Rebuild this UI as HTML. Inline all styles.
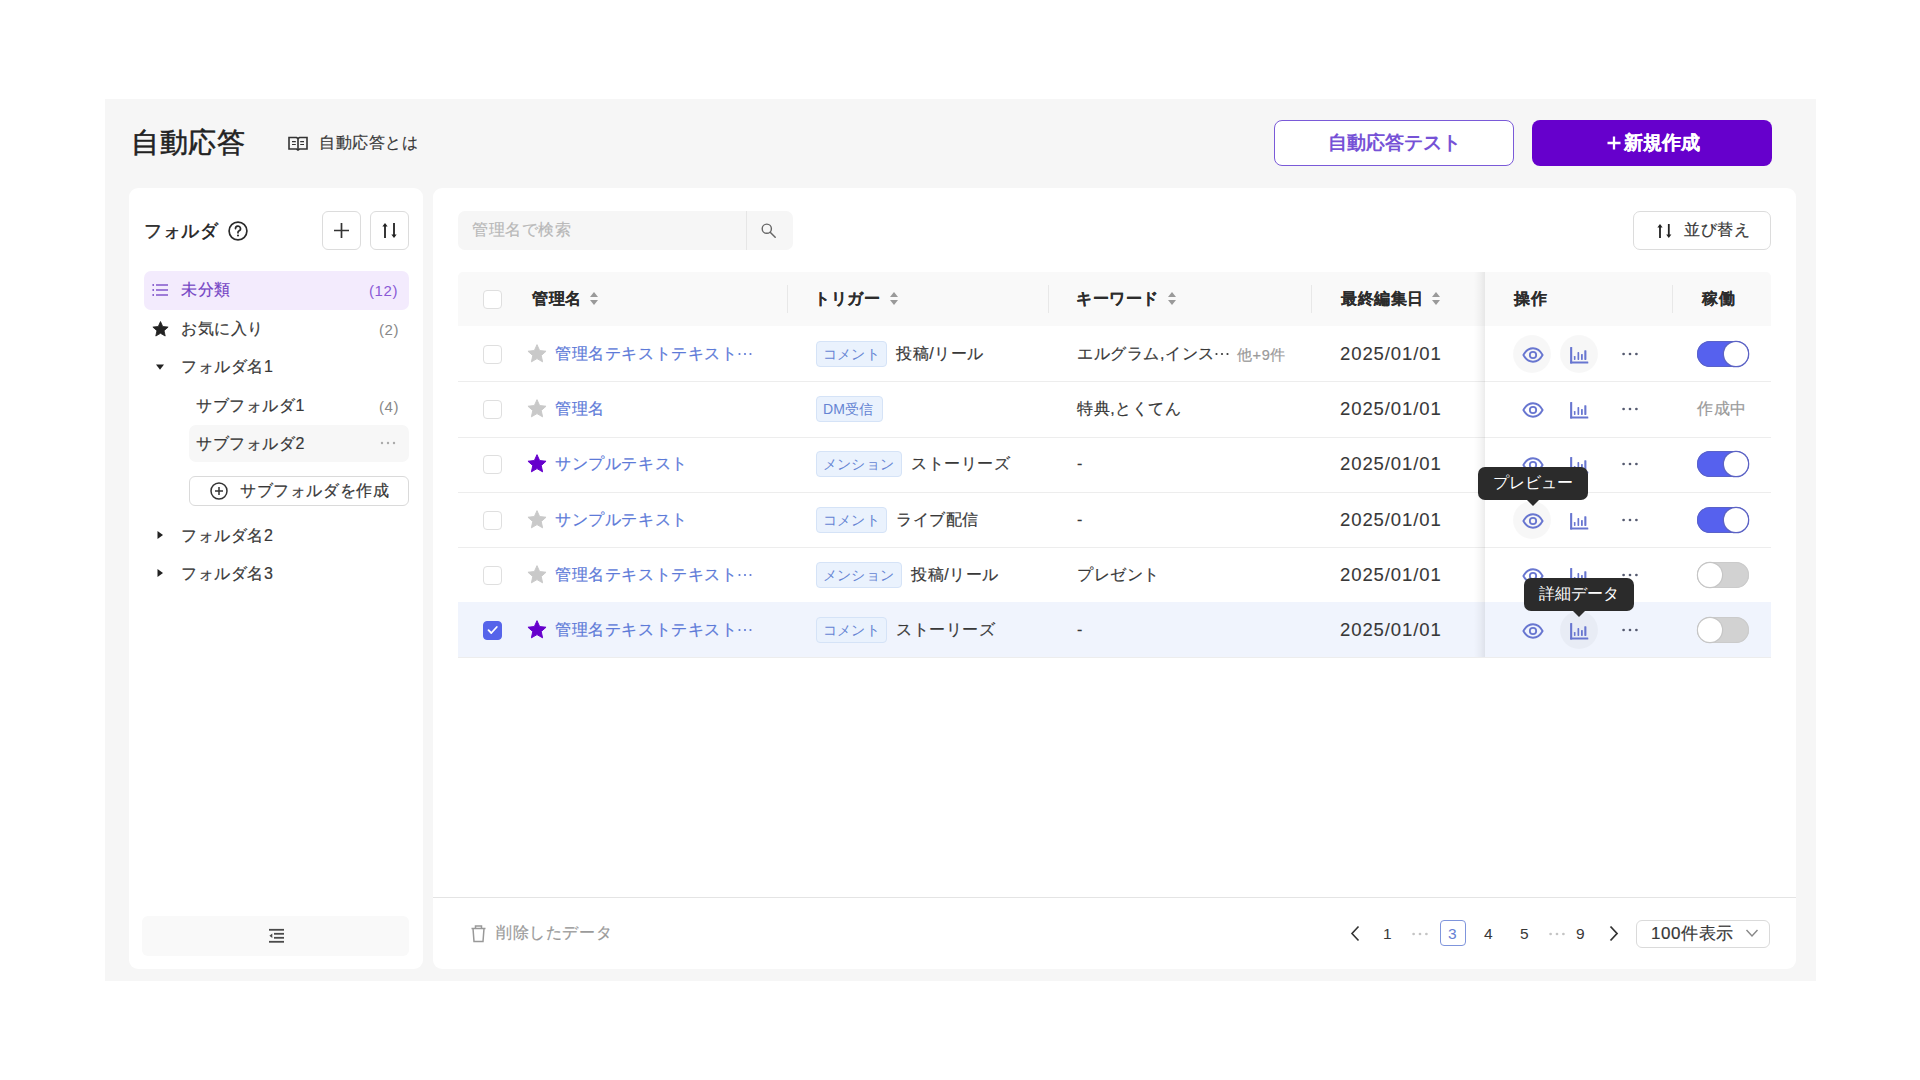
<!DOCTYPE html>
<html><head><meta charset="utf-8"><style>
*{box-sizing:border-box;margin:0;padding:0}
html,body{width:1920px;height:1080px;overflow:hidden;background:#fff;font-family:"Liberation Sans",sans-serif;color:#383838}
.a{position:absolute}
.t{position:absolute;white-space:nowrap;line-height:24px;letter-spacing:0.6px;-webkit-text-stroke:0.2px currentColor}
.sq{border:1px solid #dcdcdc;background:#fff;border-radius:6px}
.cb{position:absolute;width:19px;height:19px;border:1.5px solid #dfdfdf;border-radius:4px;background:#fff}
.row{position:absolute;left:458px;width:1313px;border-bottom:1.2px solid #ededed;box-sizing:content-box}
.tag{position:absolute;height:26px;border:1px solid #d5e3f7;background:#eaf2fd;border-radius:4px;color:#6584d3;font-size:14px;line-height:24px;padding:0 6px;letter-spacing:0.2px;white-space:nowrap}
.nm{color:#5d7ad8;font-size:16.5px}
.tx{font-size:16.5px;color:#383838}
.hd{font-size:16px;font-weight:bold;color:#2c2c2c;-webkit-text-stroke:0.05px currentColor}
.tgl{position:absolute;width:52px;height:26px;border-radius:13px}
.tgl.on{background:#5661ee;box-shadow:inset 0 0 0 1px #5a62c8}
.tgl.off{background:#d2d2d2;box-shadow:inset 0 0 0 1px #cbcbcb}
.tgl .k{position:absolute;top:1px;width:24px;height:24px;border-radius:50%;background:#fff}
.tgl.on .k{right:1px;box-shadow:0 0 0 1.3px #5c63c4}
.tgl.off .k{left:1px;box-shadow:0 0 0 1.2px #c6c6c6}
.circ{position:absolute;width:38px;height:38px;border-radius:50%;background:rgba(0,0,0,0.03)}
.tip{position:absolute;background:#2b2b2b;color:#fff;border-radius:7px;font-size:16px;line-height:32px;text-align:center;white-space:nowrap}
.tip:after{content:"";position:absolute;left:50%;bottom:-6px;margin-left:-6px;border-left:6px solid transparent;border-right:6px solid transparent;border-top:6px solid #2b2b2b}
.btn{position:absolute;border-radius:8px;display:flex;align-items:center;justify-content:center;white-space:nowrap}
</style></head><body>
<div class="a" style="left:105px;top:99px;width:1711px;height:882px;background:#f6f6f6"></div>
<div class="t" style="left:131px;top:123px;font-size:28px;line-height:40px;letter-spacing:0.5px;color:#222;-webkit-text-stroke:0.55px #222">自動応答</div>
<svg class="a" style="left:288px;top:136px" width="20" height="15" viewBox="0 0 20 15"><g fill="none" stroke="#333" stroke-width="1.6"><path d="M1 1.5h7.5l1.5 1 1.5-1H19v11.5h-7.5l-1.5 1-1.5-1H1z"/><path d="M10 2.5v11"/><path d="M4 5.6h3.8M4 8.5h3.8M12.2 5.6h3.8M12.2 8.5h3.8" stroke-width="1.1"/></g></svg>
<div class="t" style="left:319px;top:131px;font-size:16px;color:#383838">自動応答とは</div>
<div class="btn" style="left:1274px;top:120px;width:240px;height:46px;border:1.5px solid #7a5ad8;background:#fff;color:#7652d6;font-size:19px;font-weight:bold">自動応答テスト</div>
<div class="btn" style="left:1532px;top:120px;width:240px;height:46px;background:#6600cc"></div>
<svg class="a" style="left:1607px;top:135.5px" width="14" height="14" viewBox="0 0 14 14"><path d="M7 0.5v13M0.5 7h13" stroke="#fff" stroke-width="2.3"/></svg>
<div class="t" style="left:1624px;top:131px;font-size:19px;font-weight:bold;color:#fff;letter-spacing:0">新規作成</div>
<div class="a" style="left:129px;top:188px;width:294px;height:781px;background:#fff;border-radius:9px"></div>
<div class="a" style="left:433px;top:188px;width:1363px;height:781px;background:#fff;border-radius:9px"></div>
<div class="t" style="left:144px;top:219px;font-size:18px;letter-spacing:0.5px;color:#222;-webkit-text-stroke:0.45px #222">フォルダ</div>
<svg class="a" style="left:228px;top:220.5px" width="20" height="20" viewBox="0 0 20 20"><circle cx="10" cy="10" r="8.9" fill="none" stroke="#2a2a2a" stroke-width="1.7"/><path d="M7.5 7.6a2.5 2.5 0 1 1 3.4 2.3c-.6.3-.9.7-.9 1.3v.6" fill="none" stroke="#2a2a2a" stroke-width="1.7" stroke-linecap="round"/><circle cx="10" cy="14.5" r="1.05" fill="#2a2a2a"/></svg>
<div class="a sq" style="left:322px;top:211px;width:39px;height:39px"></div>
<svg class="a" style="left:332px;top:221px" width="19" height="19" viewBox="0 0 19 19"><path d="M9.5 2v15M2 9.5h15" stroke="#333" stroke-width="1.7"/></svg>
<div class="a sq" style="left:370px;top:211px;width:39px;height:39px"></div>
<svg class="a" style="left:381px;top:222px" width="17" height="17" viewBox="0 0 17 17"><g fill="#222"><rect x="3.1" y="3" width="1.8" height="13"/><path d="M1.4 4.6L4 1L6.6 4.6z"/><rect x="12.1" y="1" width="1.8" height="13"/><path d="M10.4 12.4L13 16L15.6 12.4z"/></g></svg>
<div class="a" style="left:144px;top:271px;width:265px;height:39px;background:#f3ebfd;border-radius:7px"></div>
<svg class="a" style="left:151px;top:282px" width="18" height="16" viewBox="0 0 18 16"><g fill="#7a4cc8"><circle cx="2.2" cy="3" r="0.9"/><circle cx="2.2" cy="8" r="0.9"/><circle cx="2.2" cy="13" r="0.9"/><rect x="5" y="2.3" width="12" height="1.4"/><rect x="5" y="7.3" width="12" height="1.4"/><rect x="5" y="12.3" width="12" height="1.4"/></g></svg>
<div class="t" style="left:181px;top:278px;font-size:16px;color:#7443c4;">未分類</div>
<div class="t" style="left:369px;top:279px;font-size:15px;color:#8a5ad6;-webkit-text-stroke:0">(12)</div>
<svg class="a" style="left:151.5px;top:320.5px" width="17" height="16" viewBox="0 0 24 23"><path d="M12.00 0.80L15.18 7.93L22.94 8.75L17.14 13.97L18.76 21.60L12.00 17.70L5.24 21.60L6.86 13.97L1.06 8.75L8.82 7.93z" fill="#222" stroke="#222" stroke-width="1.2" stroke-linejoin="round"/></svg>
<div class="t" style="left:181px;top:317px;font-size:16px;color:#383838;">お気に入り</div>
<div class="t" style="left:379px;top:318px;font-size:15px;color:#888;-webkit-text-stroke:0">(2)</div>
<svg class="a" style="left:155px;top:363px" width="10" height="8" viewBox="0 0 10 8"><path d="M1 1.5h8L5 6.8z" fill="#222"/></svg>
<div class="t" style="left:181px;top:355px;font-size:16px;color:#383838;">フォルダ名1</div>
<div class="t" style="left:196px;top:394px;font-size:16px;color:#383838;">サブフォルダ1</div>
<div class="t" style="left:379px;top:395px;font-size:15px;color:#888;-webkit-text-stroke:0">(4)</div>
<div class="a" style="left:189px;top:425px;width:220px;height:37px;background:#f7f7f7;border-radius:7px"></div>
<div class="t" style="left:196px;top:432px;font-size:16px;color:#383838;">サブフォルダ2</div>
<svg class="a" style="left:380px;top:441px" width="16" height="4" viewBox="0 0 16 4"><g fill="#aaa"><circle cx="2" cy="2" r="1.2"/><circle cx="8" cy="2" r="1.2"/><circle cx="14" cy="2" r="1.2"/></g></svg>
<div class="a" style="left:189px;top:476px;width:220px;height:30px;border:1px solid #dadada;border-radius:6px;background:#fff"></div>
<svg class="a" style="left:209px;top:481px" width="20" height="20" viewBox="0 0 20 20"><circle cx="10" cy="10" r="8" fill="none" stroke="#333" stroke-width="1.5"/><path d="M10 6v8M6 10h8" stroke="#333" stroke-width="1.5"/></svg>
<div class="t" style="left:240px;top:479px;font-size:16px;color:#383838;">サブフォルダを作成</div>
<svg class="a" style="left:156px;top:530px" width="8" height="10" viewBox="0 0 8 10"><path d="M1.5 1v8L7 5z" fill="#222"/></svg>
<div class="t" style="left:181px;top:524px;font-size:16px;color:#383838;">フォルダ名2</div>
<svg class="a" style="left:156px;top:568px" width="8" height="10" viewBox="0 0 8 10"><path d="M1.5 1v8L7 5z" fill="#222"/></svg>
<div class="t" style="left:181px;top:562px;font-size:16px;color:#383838;">フォルダ名3</div>
<div class="a" style="left:142px;top:916px;width:267px;height:40px;background:#f9f9f9;border-radius:6px"></div>
<svg class="a" style="left:267px;top:927px" width="19" height="18" viewBox="0 0 19 18"><g fill="#4a4a4a"><rect x="2" y="1.9" width="15" height="1.8"/><rect x="7" y="5.9" width="10" height="1.8"/><rect x="7" y="9.9" width="10" height="1.8"/><rect x="2" y="13.9" width="15" height="1.8"/><path d="M5.3 6.6v4.4L2.4 8.8z"/></g></svg>
<div class="a" style="left:458px;top:211px;width:335px;height:39px;background:#f6f6f6;border-radius:7px"></div>
<div class="a" style="left:746px;top:211px;width:1px;height:39px;background:#e6e6e6"></div>
<div class="t" style="left:472px;top:218px;font-size:16px;color:#b8b8b8;">管理名で検索</div>
<svg class="a" style="left:760px;top:222px" width="17" height="17" viewBox="0 0 17 17"><circle cx="6.8" cy="6.7" r="4.6" fill="none" stroke="#666" stroke-width="1.4"/><path d="M10.2 10.2l5 5" stroke="#666" stroke-width="1.5" stroke-linecap="round"/></svg>
<div class="a sq" style="left:1633px;top:211px;width:138px;height:39px;border-radius:7px"></div>
<svg class="a" style="left:1655.5px;top:222.5px" width="16.799999999999955" height="16.0" viewBox="0 0 16.799999999999955 16.0"><g fill="#222"><rect x="3.1" y="3" width="1.8" height="12.0"/><path d="M1.4 4.6L4.0 1L6.6 4.6z"/><rect x="11.899999999999954" y="1" width="1.8" height="12.0"/><path d="M10.199999999999955 11.4L12.799999999999955 15.0L15.399999999999954 11.4z"/></g></svg>
<div class="t" style="left:1684px;top:218px;font-size:16px;color:#383838;">並び替え</div>
<div class="a" style="left:458px;top:272px;width:1313px;height:54px;background:#f9f9f9;border-radius:5px 5px 0 0"></div>
<div class="cb" style="left:483px;top:289.5px"></div>
<div class="t hd" style="left:532px;top:287px;font-size:16px;color:#2c2c2c;">管理名</div>
<svg class="a" style="left:589px;top:291px" width="10" height="15" viewBox="0 0 10 15"><path d="M5 1L9 6H1z M5 14L1 9h8z" fill="#9a9a9a"/></svg>
<div class="a" style="left:787px;top:285px;width:1px;height:28px;background:#e8e8e8"></div>
<div class="t hd" style="left:814px;top:287px;font-size:16px;color:#2c2c2c;">トリガー</div>
<svg class="a" style="left:889px;top:291px" width="10" height="15" viewBox="0 0 10 15"><path d="M5 1L9 6H1z M5 14L1 9h8z" fill="#9a9a9a"/></svg>
<div class="a" style="left:1048px;top:285px;width:1px;height:28px;background:#e8e8e8"></div>
<div class="t hd" style="left:1076px;top:287px;font-size:16px;color:#2c2c2c;">キーワード</div>
<svg class="a" style="left:1167px;top:291px" width="10" height="15" viewBox="0 0 10 15"><path d="M5 1L9 6H1z M5 14L1 9h8z" fill="#9a9a9a"/></svg>
<div class="a" style="left:1311px;top:285px;width:1px;height:28px;background:#e8e8e8"></div>
<div class="t hd" style="left:1341px;top:287px;font-size:16px;color:#2c2c2c;">最終編集日</div>
<svg class="a" style="left:1431px;top:291px" width="10" height="15" viewBox="0 0 10 15"><path d="M5 1L9 6H1z M5 14L1 9h8z" fill="#9a9a9a"/></svg>
<div class="t hd" style="left:1514px;top:287px;font-size:16px;color:#2c2c2c;">操作</div>
<div class="a" style="left:1672px;top:285px;width:1px;height:28px;background:#e8e8e8"></div>
<div class="t hd" style="left:1702px;top:287px;font-size:16px;color:#2c2c2c;">稼働</div>
<div class="row" style="top:326.3px;height:55.2px;background:transparent"></div>
<div class="cb" style="left:483px;top:344.5px"></div>
<svg class="a" style="left:527px;top:344px" width="20" height="19" viewBox="0 0 24 23"><path d="M12.00 0.80L15.18 7.93L22.94 8.75L17.14 13.97L18.76 21.60L12.00 17.70L5.24 21.60L6.86 13.97L1.06 8.75L8.82 7.93z" fill="#c9c9c9" stroke="#c9c9c9" stroke-width="1.2" stroke-linejoin="round"/></svg>
<div class="t" style="left:555px;top:342px;font-size:16px;color:#5d7ad8;">管理名テキストテキスト</div>
<svg class="a" style="left:737px;top:352px" width="16" height="4" viewBox="0 0 16 4"><g fill="#5d7ad8"><circle cx="2.5" cy="2" r="1.1"/><circle cx="8" cy="2" r="1.1"/><circle cx="13.5" cy="2" r="1.1"/></g></svg>
<div class="tag" style="left:816px;top:341px;width:71px">コメント</div>
<div class="t" style="left:896px;top:342px;font-size:16px;color:#383838;">投稿/リール</div>
<div class="t" style="left:1077px;top:342px;font-size:16px;color:#383838;">エルグラム,インス</div>
<svg class="a" style="left:1214px;top:352px" width="16" height="4" viewBox="0 0 16 4"><g fill="#383838"><circle cx="2.5" cy="2" r="1.1"/><circle cx="8" cy="2" r="1.1"/><circle cx="13.5" cy="2" r="1.1"/></g></svg>
<div class="t" style="left:1237px;top:343px;font-size:14.6px;color:#9a9a9a;">他+9件</div>
<div class="t" style="left:1340px;top:342px;font-size:18.5px;color:#383838;letter-spacing:0.9px;-webkit-text-stroke:0.1px currentColor">2025/01/01</div>
<div class="circ" style="left:1513px;top:335px"></div>
<div class="circ" style="left:1560px;top:335px"></div>
<svg class="a" style="left:1521.5px;top:346.5px" width="22" height="16" viewBox="0 0 22 16"><path d="M1.4 8C3.8 3.6 7.2 1.3 11 1.3S18.2 3.6 20.6 8C18.2 12.4 14.8 14.7 11 14.7S3.8 12.4 1.4 8z" fill="none" stroke="#6876d0" stroke-width="1.9" stroke-linejoin="round"/><circle cx="11" cy="8" r="3.2" fill="none" stroke="#6876d0" stroke-width="1.8"/></svg><svg class="a" style="left:1569px;top:345px" width="21" height="20" viewBox="0 0 21 20"><g fill="#6876d0"><rect x="1.1" y="2.1" width="2.1" height="16.4" rx="0.5"/><rect x="1.1" y="16.6" width="18.2" height="1.9" rx="0.5"/><rect x="4.9" y="11" width="1.6" height="3.9" rx="0.6"/><rect x="8.5" y="7.1" width="1.7" height="7.8" rx="0.6"/><rect x="12" y="9" width="1.8" height="5.9" rx="0.6"/><rect x="15.3" y="5.2" width="2.1" height="9.7" rx="0.6"/></g></svg><svg class="a" style="left:1621px;top:352px" width="18" height="4" viewBox="0 0 18 4"><g fill="#555a70"><circle cx="2.6" cy="2" r="1.35"/><circle cx="9" cy="2" r="1.35"/><circle cx="15.4" cy="2" r="1.35"/></g></svg>
<div class="tgl on" style="left:1696.5px;top:341px"><div class="k"></div></div>
<div class="row" style="top:381.5px;height:55.2px;background:transparent"></div>
<div class="cb" style="left:483px;top:399.5px"></div>
<svg class="a" style="left:527px;top:399px" width="20" height="19" viewBox="0 0 24 23"><path d="M12.00 0.80L15.18 7.93L22.94 8.75L17.14 13.97L18.76 21.60L12.00 17.70L5.24 21.60L6.86 13.97L1.06 8.75L8.82 7.93z" fill="#c9c9c9" stroke="#c9c9c9" stroke-width="1.2" stroke-linejoin="round"/></svg>
<div class="t" style="left:555px;top:397px;font-size:16px;color:#5d7ad8;">管理名</div>
<div class="tag" style="left:816px;top:396px;width:67px">DM受信</div>
<div class="t" style="left:1077px;top:397px;font-size:16px;color:#383838;">特典,とくてん</div>
<div class="t" style="left:1340px;top:397px;font-size:18.5px;color:#383838;letter-spacing:0.9px;-webkit-text-stroke:0.1px currentColor">2025/01/01</div>
<svg class="a" style="left:1521.5px;top:401.5px" width="22" height="16" viewBox="0 0 22 16"><path d="M1.4 8C3.8 3.6 7.2 1.3 11 1.3S18.2 3.6 20.6 8C18.2 12.4 14.8 14.7 11 14.7S3.8 12.4 1.4 8z" fill="none" stroke="#6876d0" stroke-width="1.9" stroke-linejoin="round"/><circle cx="11" cy="8" r="3.2" fill="none" stroke="#6876d0" stroke-width="1.8"/></svg><svg class="a" style="left:1569px;top:400px" width="21" height="20" viewBox="0 0 21 20"><g fill="#6876d0"><rect x="1.1" y="2.1" width="2.1" height="16.4" rx="0.5"/><rect x="1.1" y="16.6" width="18.2" height="1.9" rx="0.5"/><rect x="4.9" y="11" width="1.6" height="3.9" rx="0.6"/><rect x="8.5" y="7.1" width="1.7" height="7.8" rx="0.6"/><rect x="12" y="9" width="1.8" height="5.9" rx="0.6"/><rect x="15.3" y="5.2" width="2.1" height="9.7" rx="0.6"/></g></svg><svg class="a" style="left:1621px;top:407px" width="18" height="4" viewBox="0 0 18 4"><g fill="#555a70"><circle cx="2.6" cy="2" r="1.35"/><circle cx="9" cy="2" r="1.35"/><circle cx="15.4" cy="2" r="1.35"/></g></svg>
<div class="t" style="left:1697px;top:397px;font-size:16px;color:#9a9a9a;">作成中</div>
<div class="row" style="top:436.7px;height:55.2px;background:transparent"></div>
<div class="cb" style="left:483px;top:454.5px"></div>
<svg class="a" style="left:527px;top:454px" width="20" height="19" viewBox="0 0 24 23"><path d="M12.00 0.80L15.18 7.93L22.94 8.75L17.14 13.97L18.76 21.60L12.00 17.70L5.24 21.60L6.86 13.97L1.06 8.75L8.82 7.93z" fill="#6600cc" stroke="#6600cc" stroke-width="1.2" stroke-linejoin="round"/></svg>
<div class="t" style="left:555px;top:452px;font-size:16px;color:#5d7ad8;">サンプルテキスト</div>
<div class="tag" style="left:816px;top:451px;width:86px">メンション</div>
<div class="t" style="left:911px;top:452px;font-size:16px;color:#383838;">ストーリーズ</div>
<div class="t" style="left:1077px;top:452px;font-size:16px;color:#383838;">-</div>
<div class="t" style="left:1340px;top:452px;font-size:18.5px;color:#383838;letter-spacing:0.9px;-webkit-text-stroke:0.1px currentColor">2025/01/01</div>
<svg class="a" style="left:1521.5px;top:456.5px" width="22" height="16" viewBox="0 0 22 16"><path d="M1.4 8C3.8 3.6 7.2 1.3 11 1.3S18.2 3.6 20.6 8C18.2 12.4 14.8 14.7 11 14.7S3.8 12.4 1.4 8z" fill="none" stroke="#6876d0" stroke-width="1.9" stroke-linejoin="round"/><circle cx="11" cy="8" r="3.2" fill="none" stroke="#6876d0" stroke-width="1.8"/></svg><svg class="a" style="left:1569px;top:455px" width="21" height="20" viewBox="0 0 21 20"><g fill="#6876d0"><rect x="1.1" y="2.1" width="2.1" height="16.4" rx="0.5"/><rect x="1.1" y="16.6" width="18.2" height="1.9" rx="0.5"/><rect x="4.9" y="11" width="1.6" height="3.9" rx="0.6"/><rect x="8.5" y="7.1" width="1.7" height="7.8" rx="0.6"/><rect x="12" y="9" width="1.8" height="5.9" rx="0.6"/><rect x="15.3" y="5.2" width="2.1" height="9.7" rx="0.6"/></g></svg><svg class="a" style="left:1621px;top:462px" width="18" height="4" viewBox="0 0 18 4"><g fill="#555a70"><circle cx="2.6" cy="2" r="1.35"/><circle cx="9" cy="2" r="1.35"/><circle cx="15.4" cy="2" r="1.35"/></g></svg>
<div class="tgl on" style="left:1696.5px;top:451px"><div class="k"></div></div>
<div class="row" style="top:491.9px;height:55.2px;background:transparent"></div>
<div class="cb" style="left:483px;top:510.5px"></div>
<svg class="a" style="left:527px;top:510px" width="20" height="19" viewBox="0 0 24 23"><path d="M12.00 0.80L15.18 7.93L22.94 8.75L17.14 13.97L18.76 21.60L12.00 17.70L5.24 21.60L6.86 13.97L1.06 8.75L8.82 7.93z" fill="#c9c9c9" stroke="#c9c9c9" stroke-width="1.2" stroke-linejoin="round"/></svg>
<div class="t" style="left:555px;top:508px;font-size:16px;color:#5d7ad8;">サンプルテキスト</div>
<div class="tag" style="left:816px;top:507px;width:71px">コメント</div>
<div class="t" style="left:896px;top:508px;font-size:16px;color:#383838;">ライブ配信</div>
<div class="t" style="left:1077px;top:508px;font-size:16px;color:#383838;">-</div>
<div class="t" style="left:1340px;top:508px;font-size:18.5px;color:#383838;letter-spacing:0.9px;-webkit-text-stroke:0.1px currentColor">2025/01/01</div>
<div class="circ" style="left:1513px;top:501px"></div>
<svg class="a" style="left:1521.5px;top:512.5px" width="22" height="16" viewBox="0 0 22 16"><path d="M1.4 8C3.8 3.6 7.2 1.3 11 1.3S18.2 3.6 20.6 8C18.2 12.4 14.8 14.7 11 14.7S3.8 12.4 1.4 8z" fill="none" stroke="#6876d0" stroke-width="1.9" stroke-linejoin="round"/><circle cx="11" cy="8" r="3.2" fill="none" stroke="#6876d0" stroke-width="1.8"/></svg><svg class="a" style="left:1569px;top:511px" width="21" height="20" viewBox="0 0 21 20"><g fill="#6876d0"><rect x="1.1" y="2.1" width="2.1" height="16.4" rx="0.5"/><rect x="1.1" y="16.6" width="18.2" height="1.9" rx="0.5"/><rect x="4.9" y="11" width="1.6" height="3.9" rx="0.6"/><rect x="8.5" y="7.1" width="1.7" height="7.8" rx="0.6"/><rect x="12" y="9" width="1.8" height="5.9" rx="0.6"/><rect x="15.3" y="5.2" width="2.1" height="9.7" rx="0.6"/></g></svg><svg class="a" style="left:1621px;top:518px" width="18" height="4" viewBox="0 0 18 4"><g fill="#555a70"><circle cx="2.6" cy="2" r="1.35"/><circle cx="9" cy="2" r="1.35"/><circle cx="15.4" cy="2" r="1.35"/></g></svg>
<div class="tgl on" style="left:1696.5px;top:507px"><div class="k"></div></div>
<div class="row" style="top:547.1px;height:55.2px;background:transparent"></div>
<div class="cb" style="left:483px;top:565.5px"></div>
<svg class="a" style="left:527px;top:565px" width="20" height="19" viewBox="0 0 24 23"><path d="M12.00 0.80L15.18 7.93L22.94 8.75L17.14 13.97L18.76 21.60L12.00 17.70L5.24 21.60L6.86 13.97L1.06 8.75L8.82 7.93z" fill="#c9c9c9" stroke="#c9c9c9" stroke-width="1.2" stroke-linejoin="round"/></svg>
<div class="t" style="left:555px;top:563px;font-size:16px;color:#5d7ad8;">管理名テキストテキスト</div>
<svg class="a" style="left:737px;top:573px" width="16" height="4" viewBox="0 0 16 4"><g fill="#5d7ad8"><circle cx="2.5" cy="2" r="1.1"/><circle cx="8" cy="2" r="1.1"/><circle cx="13.5" cy="2" r="1.1"/></g></svg>
<div class="tag" style="left:816px;top:562px;width:86px">メンション</div>
<div class="t" style="left:911px;top:563px;font-size:16px;color:#383838;">投稿/リール</div>
<div class="t" style="left:1077px;top:563px;font-size:16px;color:#383838;">プレゼント</div>
<div class="t" style="left:1340px;top:563px;font-size:18.5px;color:#383838;letter-spacing:0.9px;-webkit-text-stroke:0.1px currentColor">2025/01/01</div>
<svg class="a" style="left:1521.5px;top:567.5px" width="22" height="16" viewBox="0 0 22 16"><path d="M1.4 8C3.8 3.6 7.2 1.3 11 1.3S18.2 3.6 20.6 8C18.2 12.4 14.8 14.7 11 14.7S3.8 12.4 1.4 8z" fill="none" stroke="#6876d0" stroke-width="1.9" stroke-linejoin="round"/><circle cx="11" cy="8" r="3.2" fill="none" stroke="#6876d0" stroke-width="1.8"/></svg><svg class="a" style="left:1569px;top:566px" width="21" height="20" viewBox="0 0 21 20"><g fill="#6876d0"><rect x="1.1" y="2.1" width="2.1" height="16.4" rx="0.5"/><rect x="1.1" y="16.6" width="18.2" height="1.9" rx="0.5"/><rect x="4.9" y="11" width="1.6" height="3.9" rx="0.6"/><rect x="8.5" y="7.1" width="1.7" height="7.8" rx="0.6"/><rect x="12" y="9" width="1.8" height="5.9" rx="0.6"/><rect x="15.3" y="5.2" width="2.1" height="9.7" rx="0.6"/></g></svg><svg class="a" style="left:1621px;top:573px" width="18" height="4" viewBox="0 0 18 4"><g fill="#555a70"><circle cx="2.6" cy="2" r="1.35"/><circle cx="9" cy="2" r="1.35"/><circle cx="15.4" cy="2" r="1.35"/></g></svg>
<div class="tgl off" style="left:1696.5px;top:562px"><div class="k"></div></div>
<div class="row" style="top:602.3px;height:55.2px;background:#f0f4fd"></div>
<div class="cb" style="left:483px;top:620.5px;background:#5664ea;border-color:#5664ea"></div><svg class="a" style="left:486px;top:624px" width="13" height="12" viewBox="0 0 13 12"><path d="M2.5 6.2l2.8 2.8 5.5-6" fill="none" stroke="#fff" stroke-width="1.8" stroke-linecap="round" stroke-linejoin="round"/></svg>
<svg class="a" style="left:527px;top:620px" width="20" height="19" viewBox="0 0 24 23"><path d="M12.00 0.80L15.18 7.93L22.94 8.75L17.14 13.97L18.76 21.60L12.00 17.70L5.24 21.60L6.86 13.97L1.06 8.75L8.82 7.93z" fill="#6600cc" stroke="#6600cc" stroke-width="1.2" stroke-linejoin="round"/></svg>
<div class="t" style="left:555px;top:618px;font-size:16px;color:#5d7ad8;">管理名テキストテキスト</div>
<svg class="a" style="left:737px;top:628px" width="16" height="4" viewBox="0 0 16 4"><g fill="#5d7ad8"><circle cx="2.5" cy="2" r="1.1"/><circle cx="8" cy="2" r="1.1"/><circle cx="13.5" cy="2" r="1.1"/></g></svg>
<div class="tag" style="left:816px;top:617px;width:71px">コメント</div>
<div class="t" style="left:896px;top:618px;font-size:16px;color:#383838;">ストーリーズ</div>
<div class="t" style="left:1077px;top:618px;font-size:16px;color:#383838;">-</div>
<div class="t" style="left:1340px;top:618px;font-size:18.5px;color:#383838;letter-spacing:0.9px;-webkit-text-stroke:0.1px currentColor">2025/01/01</div>
<div class="circ" style="left:1560px;top:611px"></div>
<svg class="a" style="left:1521.5px;top:622.5px" width="22" height="16" viewBox="0 0 22 16"><path d="M1.4 8C3.8 3.6 7.2 1.3 11 1.3S18.2 3.6 20.6 8C18.2 12.4 14.8 14.7 11 14.7S3.8 12.4 1.4 8z" fill="none" stroke="#6876d0" stroke-width="1.9" stroke-linejoin="round"/><circle cx="11" cy="8" r="3.2" fill="none" stroke="#6876d0" stroke-width="1.8"/></svg><svg class="a" style="left:1569px;top:621px" width="21" height="20" viewBox="0 0 21 20"><g fill="#6876d0"><rect x="1.1" y="2.1" width="2.1" height="16.4" rx="0.5"/><rect x="1.1" y="16.6" width="18.2" height="1.9" rx="0.5"/><rect x="4.9" y="11" width="1.6" height="3.9" rx="0.6"/><rect x="8.5" y="7.1" width="1.7" height="7.8" rx="0.6"/><rect x="12" y="9" width="1.8" height="5.9" rx="0.6"/><rect x="15.3" y="5.2" width="2.1" height="9.7" rx="0.6"/></g></svg><svg class="a" style="left:1621px;top:628px" width="18" height="4" viewBox="0 0 18 4"><g fill="#555a70"><circle cx="2.6" cy="2" r="1.35"/><circle cx="9" cy="2" r="1.35"/><circle cx="15.4" cy="2" r="1.35"/></g></svg>
<div class="tgl off" style="left:1696.5px;top:617px"><div class="k"></div></div>
<div class="a" style="left:1474px;top:272px;width:11px;height:385px;background:linear-gradient(to right,rgba(0,0,0,0),rgba(0,0,0,0.035) 60%,rgba(0,0,0,0.075))"></div>
<div class="tip" style="left:1478px;top:467px;width:110px;height:33px">プレビュー</div>
<div class="tip" style="left:1524px;top:578px;width:110px;height:33px">詳細データ</div>
<div class="a" style="left:433px;top:897px;width:1363px;height:1.2px;background:#e4e4e4"></div>
<svg class="a" style="left:470px;top:924px" width="17" height="19" viewBox="0 0 17 19"><g fill="none" stroke="#999" stroke-width="1.5"><path d="M1.5 4.5h14M5.5 4.5V2h6v2.5M3 4.5l1 13h9l1-13"/></g></svg>
<div class="t" style="left:496px;top:921px;font-size:16px;color:#9a9a9a;">削除したデータ</div>
<svg class="a" style="left:1349px;top:925px" width="12" height="17" viewBox="0 0 12 17"><path d="M9.5 1.5L3 8.5l6.5 7" fill="none" stroke="#333" stroke-width="1.6"/></svg>
<div class="t" style="left:1383px;top:922px;font-size:15.5px;color:#383838;-webkit-text-stroke:0">1</div>
<svg class="a" style="left:1411px;top:932px" width="18" height="4" viewBox="0 0 18 4"><g fill="#c4c4c4"><circle cx="2.6" cy="2" r="1.35"/><circle cx="9" cy="2" r="1.35"/><circle cx="15.4" cy="2" r="1.35"/></g></svg>
<div class="a" style="left:1440px;top:920px;width:26px;height:26px;border:1.3px solid #7f95dc;border-radius:4px"></div>
<div class="t" style="left:1448px;top:922px;font-size:15.5px;color:#6580d4;-webkit-text-stroke:0">3</div>
<div class="t" style="left:1484px;top:922px;font-size:15.5px;color:#383838;-webkit-text-stroke:0">4</div>
<div class="t" style="left:1520px;top:922px;font-size:15.5px;color:#383838;-webkit-text-stroke:0">5</div>
<svg class="a" style="left:1548px;top:932px" width="18" height="4" viewBox="0 0 18 4"><g fill="#c4c4c4"><circle cx="2.6" cy="2" r="1.35"/><circle cx="9" cy="2" r="1.35"/><circle cx="15.4" cy="2" r="1.35"/></g></svg>
<div class="t" style="left:1576px;top:922px;font-size:15.5px;color:#383838;-webkit-text-stroke:0">9</div>
<svg class="a" style="left:1608px;top:925px" width="12" height="17" viewBox="0 0 12 17"><path d="M2.5 1.5L9 8.5l-6.5 7" fill="none" stroke="#333" stroke-width="1.8"/></svg>
<div class="a" style="left:1636px;top:920px;width:134px;height:28px;border:1px solid #dadada;border-radius:6px"></div>
<div class="t" style="left:1651px;top:922px;font-size:17px;color:#383838;">100件表示</div>
<svg class="a" style="left:1745px;top:928px" width="14" height="10" viewBox="0 0 14 10"><path d="M1.5 2l5.5 6 5.5-6" fill="none" stroke="#888" stroke-width="1.4"/></svg>
</body></html>
